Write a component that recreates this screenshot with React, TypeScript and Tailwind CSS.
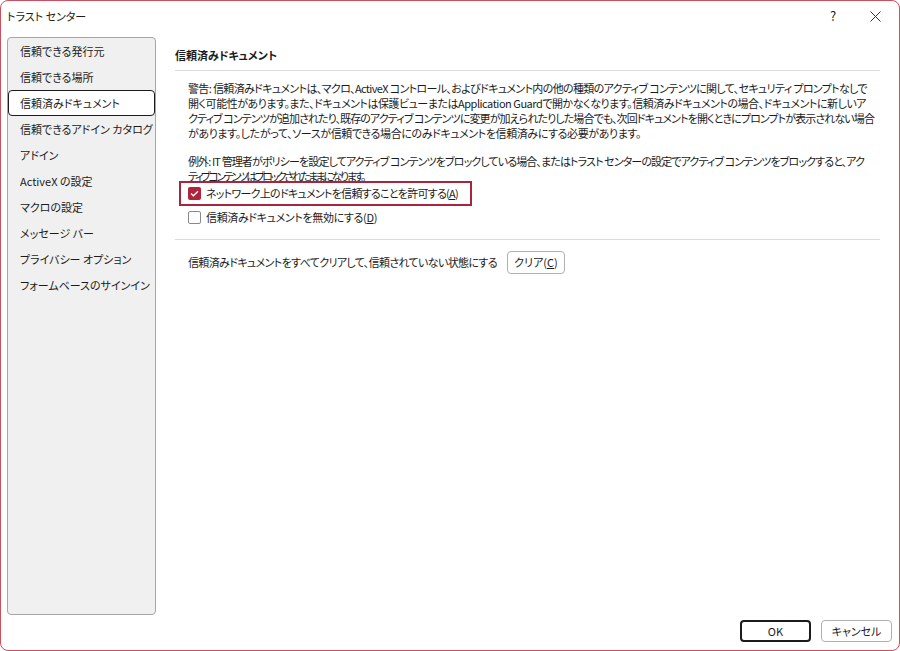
import React, { useLayoutEffect, useRef, useState } from "react";

const navItems = [
  "信頼できる発行元",
  "信頼できる場所",
  "信頼済みドキュメント",
  "信頼できるアドイン カタログ",
  "アドイン",
  "ActiveX の設定",
  "マクロの設定",
  "メッセージ バー",
  "プライバシー オプション",
  "フォームベースのサインイン",
];

// [text, width in the reference]
const warningLines: [string, number][] = [
  ["警告: 信頼済みドキュメントは、マクロ、ActiveX コントロール、およびドキュメント内の他の種類のアクティブ コンテンツに関して、セキュリティ プロンプトなしで", 679],
  ["開く可能性があります。また、ドキュメントは保護ビューまたはApplication Guardで開かなくなります。信頼済みドキュメントの場合、ドキュメントに新しいア", 678],
  ["クティブ コンテンツが追加されたり、既存のアクティブ コンテンツに変更が加えられたりした場合でも、次回ドキュメントを開くときにプロンプトが表示されない場合", 686],
  ["があります。したがって、ソースが信頼できる場合にのみドキュメントを信頼済みにする必要があります。", 453],
];

const exceptionLines: [string, number][] = [
  ["例外: IT 管理者がポリシーを設定してアクティブ コンテンツをブロックしている場合、またはトラスト センターの設定でアクティブ コンテンツをブロックすると、アク", 676],
  ["ティブ コンテンツはブロックされたままになります。", 176],
];

// squeeze a single line to the width it has in the reference
function Fit({ width, children, className = "" }: { width: number; children: React.ReactNode; className?: string }) {
  const ref = useRef<HTMLSpanElement>(null);
  const [ls, setLs] = useState(0);
  useLayoutEffect(() => {
    const el = ref.current;
    if (!el) return;
    el.style.letterSpacing = "0px";
    const w = el.getBoundingClientRect().width;
    const n = (el.textContent || "").length;
    if (n > 1) setLs((width - w) / n);
  }, [width]);
  return (
    <span ref={ref} className={`inline-block whitespace-nowrap ${className}`} style={{ letterSpacing: `${ls}px` }}>
      {children}
    </span>
  );
}

function CheckRow({ checked, label, hotkey, focused, width }: { checked: boolean; label: string; hotkey: string; focused?: boolean; width: number }) {
  return (
    <div
      className={`flex items-center gap-[5px] -ml-[9px] w-[293px] ${
        focused ? "border-2 border-[#a8253d] h-[25px] pl-[7px]" : "h-[23px] pl-[9px]"
      }`}
    >
      {checked ? (
        <span className="w-[13px] h-[13px] shrink-0 rounded-[2px] bg-[#b0233b] flex items-center justify-center">
          <svg width="9" height="7" viewBox="0 0 9 7" fill="none">
            <path d="M1 3.6 L3.4 5.8 L8 1.2" stroke="white" strokeWidth="1.3" />
          </svg>
        </span>
      ) : (
        <span className="w-[13px] h-[13px] shrink-0 rounded-[2px] border border-[#8a8a8a] bg-white" />
      )}
      <Fit width={width}>
        {label}(<span className="underline">{hotkey}</span>)
      </Fit>
    </div>
  );
}

export default function App() {
  return (
    <div className="w-[900px] h-[651px] bg-white border border-[#c8505f] rounded-[8px] overflow-hidden flex flex-col text-[11px] text-[#1b1b1b] font-['Noto_Sans_CJK_JP','Noto_Sans',sans-serif] [font-feature-settings:'palt']">
      {/* title bar */}
      <div className="h-[30px] flex items-center pl-[6px] shrink-0">
        <span className="flex-1">トラスト センター</span>
        <span className="w-[20px] text-center text-[13px] mr-[27px]">?</span>
        <svg width="11" height="11" viewBox="0 0 11 11" className="mr-[18px]">
          <path d="M0.5 0.5 L10.5 10.5 M10.5 0.5 L0.5 10.5" stroke="#333" strokeWidth="1" />
        </svg>
      </div>

      <div className="flex pt-[6px] pl-[6px] pr-[19px]">
        {/* left nav */}
        <div className="w-[149px] h-[578px] shrink-0 bg-[#f0f0f0] border border-[#a6a6a6] rounded-[4px]">
          {navItems.map((item, i) =>
            i === 2 ? (
              <div key={item} className="h-[26px] flex items-center pl-[11px] border-[1.5px] border-[#1b1b1b] rounded-[4px] bg-white whitespace-nowrap">
                {item}
              </div>
            ) : (
              <div key={item} className="h-[26px] flex items-center pl-[12px] whitespace-nowrap">
                {item}
              </div>
            )
          )}
        </div>

        {/* content */}
        <div className="flex-1 min-w-0 ml-[19px] pt-[10px]">
          <div className="h-[16px] flex items-center font-bold">信頼済みドキュメント</div>
          <div className="mt-[7px] h-px bg-[#dcdcdc]" />

          <div className="pl-[13px]">
            <div className="mt-[10px] leading-[15px]">
              {warningLines.map(([l, w]) => (
                <div key={l}>
                  <Fit width={w}>{l}</Fit>
                </div>
              ))}
            </div>
            <div className="mt-[13px] leading-[15px] h-[27px] overflow-hidden">
              {exceptionLines.map(([l, w]) => (
                <div key={l}>
                  <Fit width={w}>{l}</Fit>
                </div>
              ))}
            </div>
            <CheckRow checked focused label="ネットワーク上のドキュメントを信頼することを許可する" hotkey="A" width={252} />
            <CheckRow checked={false} label="信頼済みドキュメントを無効にする" hotkey="D" width={171} />
          </div>

          <div className="mt-[10px] h-px bg-[#dcdcdc]" />

          <div className="pl-[13px] mt-[11px] flex items-center gap-[10px]">
            <Fit width={309}>信頼済みドキュメントをすべてクリアして、信頼されていない状態にする</Fit>
            <button className="h-[23px] w-[58px] border border-[#b0b0b0] rounded-[4px] bg-white">
              クリア(<span className="underline">C</span>)
            </button>
          </div>
        </div>
      </div>

      {/* footer */}
      <div className="flex justify-end gap-[10px] pr-[7px] mt-[5px]">
        <button className="w-[71px] h-[22px] border-2 border-[#1b1b1b] rounded-[4px] bg-white">OK</button>
        <button className="w-[71px] h-[22px] border border-[#b0b0b0] rounded-[4px] bg-white">キャンセル</button>
      </div>
    </div>
  );
}
